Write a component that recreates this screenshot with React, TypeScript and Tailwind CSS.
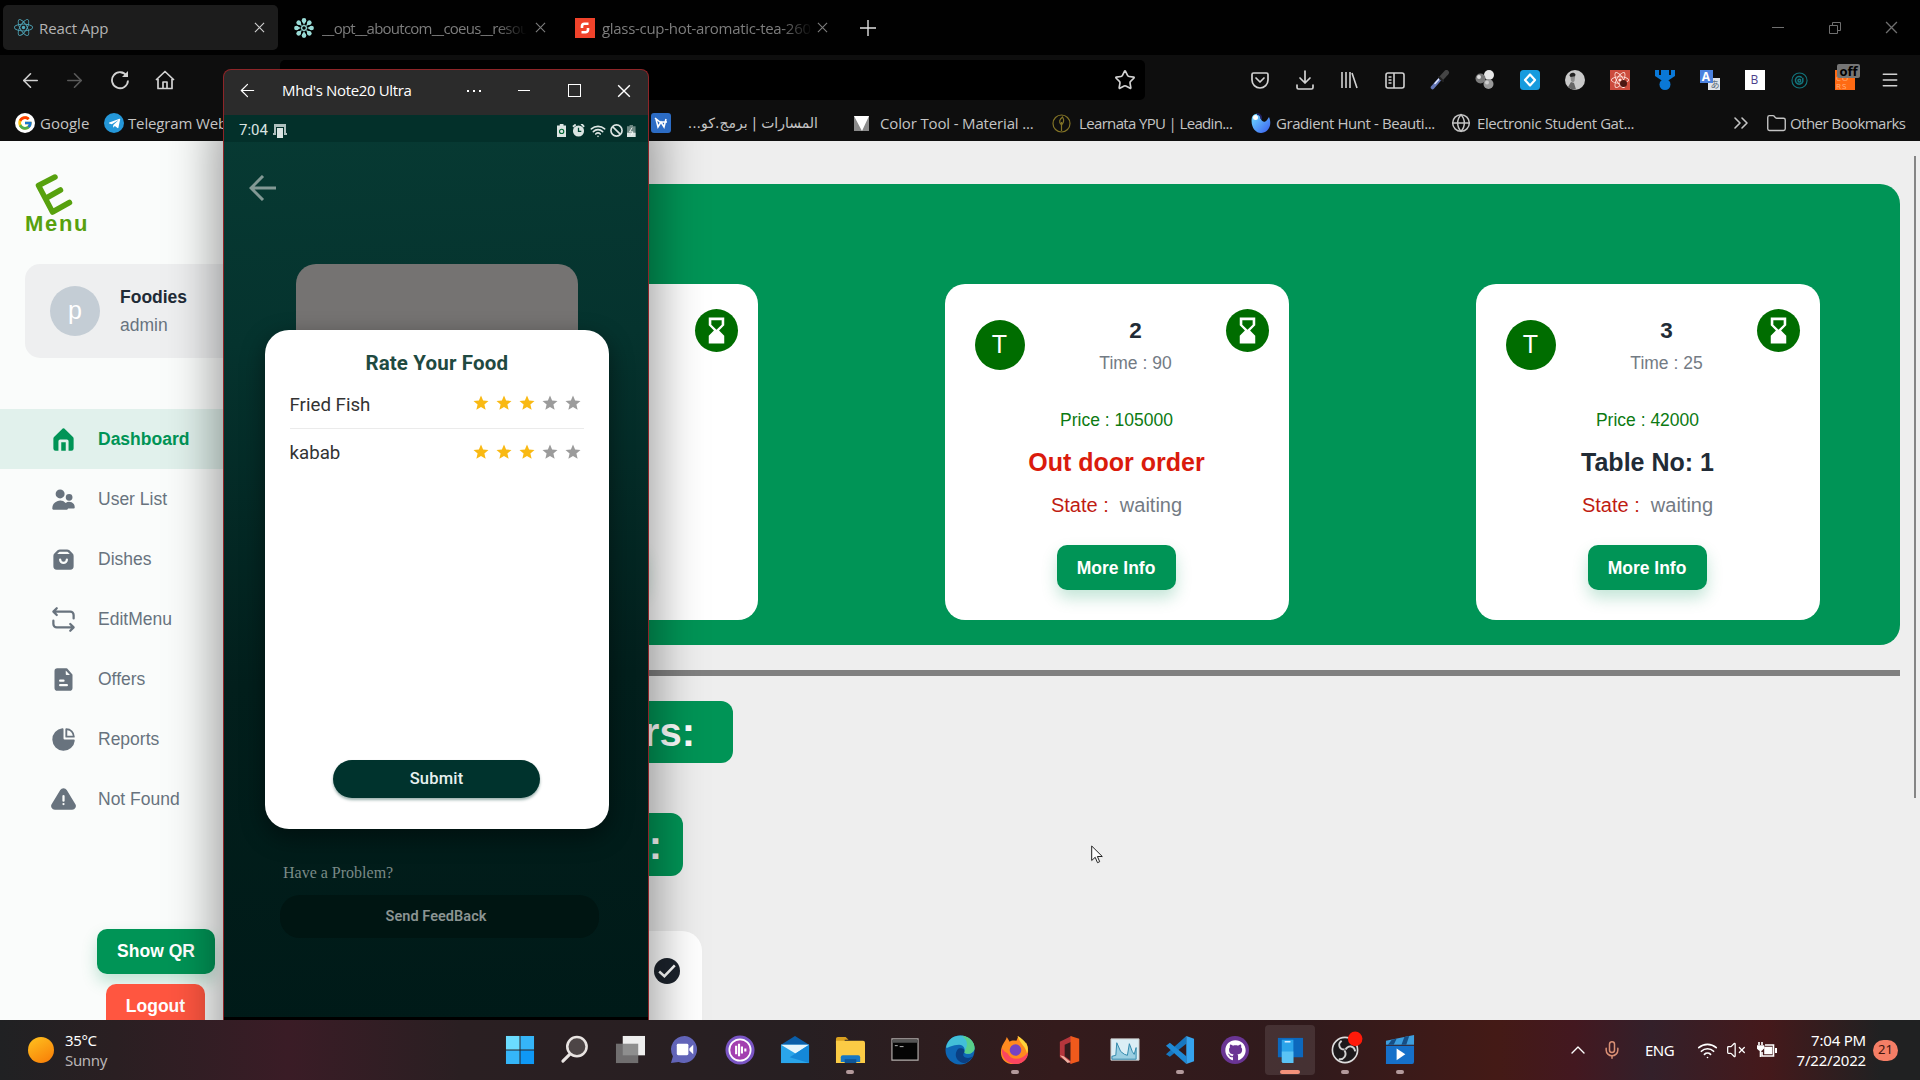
import React from "react";
import {
  ArrowLeft, ArrowRight, Star, Menu, Folder, Globe, ChevronsRight, Mic, ChevronUp, Wifi, VolumeX,
} from "lucide-react";
import { FaReact, FaGithub, FaTelegramPlane } from "react-icons/fa";
import { FcGoogle } from "react-icons/fc";

type P = { children?: React.ReactNode; className?: string };

/* A fixed-width cell that centres its icon. */
const Cell = ({ children, className = "" }: P) => (
  <div className={`flex shrink-0 items-center justify-center ${className}`}>{children}</div>
);

const Cross = ({ className = "" }: P) => (
  <svg viewBox="0 0 12 12" className={className} fill="none" stroke="currentColor" strokeWidth="1.2">
    <path d="M1 1l10 10M11 1L1 11" />
  </svg>
);

const Snow = () => (
  <svg viewBox="-10 -10 20 20" className="size-5" fill="#9adbd6">
    <circle r="2.4" fill="none" stroke="#9adbd6" strokeWidth="1.2" />
    {[0, 45, 90, 135, 180, 225, 270, 315].map((a) => (
      <g key={a} transform={`rotate(${a})`}>
        <circle cy="-7.6" r="2.3" />
        <path d="M-2 -7.2L0 -3L2 -7.2Z" />
      </g>
    ))}
  </svg>
);

function TabStrip() {
  return (
    <div className="flex h-[55px] bg-[#010101] pt-[5px] pl-[3px] text-[15px] text-[#7d7d7d]">
      <div className="flex h-[45px] w-[275px] items-center rounded-[5px] bg-[#1c1c1c] text-[#b4b4b4]">
        <Cell className="w-[40px]"><FaReact className="size-[19px] text-[#4fa9bd]" /></Cell>
        <span className="-ml-1 w-[205px] pt-[2px] tracking-[-0.1px] whitespace-nowrap">React App</span>
        <Cell className="w-[30px]"><Cross className="size-[11px] text-[#d0d0d0]" /></Cell>
      </div>
      <div className="ml-[16px] flex h-[45px] w-[265px] items-center">
        <Snow />
        <span className="ml-[8px] w-[205px] overflow-hidden pt-[2px] tracking-[-0.75px] whitespace-nowrap [mask-image:linear-gradient(90deg,#000_85%,transparent_100%)]">__opt__aboutcom__coeus__resou</span>
        <Cell className="w-[26px]"><Cross className="size-[11px]" /></Cell>
      </div>
      <div className="ml-[16px] flex h-[45px] w-[262px] items-center">
        <svg viewBox="0 0 20 20" className="size-5">
          <rect width="20" height="20" fill="#f0432b" />
          <path d="M13.500 5.800H9.500a2.500 2.500 0 0 0-2.500 2.500V10M6.500 14.200h4a2.500 2.500 0 0 0 2.500-2.500V10" fill="none" stroke="#fff" strokeWidth="2.6" />
        </svg>
        <span className="ml-[7px] w-[211px] overflow-hidden pt-[2px] tracking-[-0.3px] whitespace-nowrap [mask-image:linear-gradient(90deg,#000_85%,transparent_100%)]">glass-cup-hot-aromatic-tea-260</span>
        <Cell className="w-[18px]"><Cross className="size-[11px]" /></Cell>
      </div>
      <Cell className="ml-[19px] h-[45px] w-[24px]">
        <svg viewBox="0 0 16 16" className="size-4" stroke="#e0e0e0" strokeWidth="1.4"><path d="M8 0v16M0 8h16" /></svg>
      </Cell>
      <div className="ml-auto flex h-[45px] text-[#6f6f6f]">
        <Cell className="w-[57px]"><div className="h-px w-3 bg-[#6f6f6f]" /></Cell>
        <Cell className="w-[57px]">
          <svg viewBox="0 0 12 12" className="size-3" fill="none" stroke="currentColor"><path d="M.5 3.5h8v8h-8zM3.5 3.5v-3h8v8h-3" /></svg>
        </Cell>
        <Cell className="w-[57px]"><Cross className="size-[13px]" /></Cell>
      </div>
    </div>
  );
}

function NavBar() {
  const c = "w-[45px]";
  return (
    <div className="flex h-[50px] items-center bg-[#0e0e0e] pl-[8px] text-[#d2d2d2]">
      <Cell className="w-[44px]"><ArrowLeft className="size-[23px]" strokeWidth={1.7} /></Cell>
      <Cell className={c}><ArrowRight className="size-[23px] text-[#5a5a5a]" strokeWidth={1.7} /></Cell>
      <Cell className={c}>
        <svg viewBox="0 0 20 20" className="size-5" fill="none" stroke="currentColor" strokeWidth="1.8">
          <path d="M16.8 6A8 8 0 1 0 18 10.5" /><path d="M18 1v6h-6z" fill="currentColor" stroke="none" />
        </svg>
      </Cell>
      <Cell className={c}>
        <svg viewBox="0 0 20 20" className="size-5" fill="none" stroke="currentColor" strokeWidth="1.7" strokeLinejoin="round">
          <path d="M1 10L10 1.5 19 10M3 9v9.5h14V9M8 18v-6h4v6" />
        </svg>
      </Cell>
      <div className="ml-[93px] flex h-10 w-[865px] items-center justify-end rounded-[5px] bg-black pr-[9px]">
        <Star className="size-[22px]" strokeWidth={1.8} />
      </div>
      <div className="ml-[92px] flex h-full items-center">
        <Cell className={c}>
          <svg viewBox="0 0 18 17" className="w-[18px]" fill="none" stroke="currentColor" strokeWidth="1.7" strokeLinecap="round" strokeLinejoin="round">
            <path d="M2.5 1h13A1.5 1.5 0 0 1 17 2.5V8A8 8 0 0 1 1 8V2.5A1.500 1.500 0 0 1 2.500 1zM5 6l4 4 4-4" />
          </svg>
        </Cell>
        <Cell className={c}>
          <svg viewBox="0 0 18 20" className="w-[18px]" fill="none" stroke="currentColor" strokeWidth="1.7" strokeLinecap="round" strokeLinejoin="round">
            <path d="M9 1v12M4 8l5 5 5-5M1 15v2.500A1.500 1.500 0 0 0 2.500 19h13a1.500 1.500 0 0 0 1.500-1.500V15" />
          </svg>
        </Cell>
        <Cell className={c}>
          <svg viewBox="0 0 17 18" className="w-[17px]" stroke="currentColor" strokeWidth="1.6"><path d="M1 1v16M5 1v16M9 1v16M11 2l5 15" /></svg>
        </Cell>
        <Cell className={c}>
          <svg viewBox="0 0 20 17" className="w-[20px]" fill="none" stroke="currentColor" strokeWidth="1.6"><rect x="1" y="1" width="18" height="15" rx="2" /><path d="M9 1v15M3.500 5h3M3.500 8h3M3.500 11h3" /></svg>
        </Cell>
        <Cell className={c}>
          <svg viewBox="0 0 20 20" className="size-5" strokeLinecap="round"><path d="M2.500 17.500L10 9" stroke="#6578b8" strokeWidth="3.600" /><path d="M5 13.500l4-4.500" stroke="#dfe6ff" strokeWidth="1.500" /><path d="M11.500 8l5-5.500" stroke="#454545" strokeWidth="5" /><path d="M9 7l4 4" stroke="#222" strokeWidth="2" /></svg>
        </Cell>
        <Cell className={c}>
          <svg viewBox="0 0 20 20" className="size-5"><circle cx="14" cy="5" r="5" fill="#e8e8e8" /><circle cx="5.500" cy="8.500" r="5" fill="#7b7b7b" /><circle cx="4" cy="7" r="2" fill="#ddd" /><circle cx="13.500" cy="14" r="5" fill="#999" /><circle cx="12" cy="12.500" r="2" fill="#ccc" /></svg>
        </Cell>
        <Cell className={c}>
          <svg viewBox="0 0 20 20" className="size-5"><rect width="20" height="20" rx="3.500" fill="#169bde" /><path d="M10 4.500l5 5.500-5 5.500-5-5.500z" fill="none" stroke="#fff" strokeWidth="2.200" strokeLinejoin="round" /></svg>
        </Cell>
        <Cell className={c}>
          <svg viewBox="0 0 20 20" className="size-5"><circle cx="10" cy="10" r="10" fill="#c9c9c9" /><path d="M4.500 5.500c0-3 5-4 6-1l-.5 2-4.500.5z" fill="#222" /><path d="M5.500 7H10l-.5 4L8 12.500 6 11z" fill="#8d8d8d" /><path d="M3 17l3-5 3 1 2 6.500a10 10 0 0 1-8-2.500z" fill="#666" /></svg>
        </Cell>
        <Cell className={c}>
          <div className="relative flex size-5 items-center justify-center bg-[#cc4b3c]"><FaReact className="size-[18px] text-[#ffe9e3]" /><div className="absolute right-[3px] bottom-[3px] size-[7px] rounded-full bg-[#4a1712]" /></div>
        </Cell>
        <Cell className={c}>
          <svg viewBox="0 0 20 20" className="size-5" fill="#0a78d6"><path d="M0 0h4v5h2V0h8v5h2V0h4v6l-6 4H6L0 6z" /><circle cx="10" cy="14.500" r="5.500" /></svg>
        </Cell>
        <Cell className={c}>
          <div className="relative size-5">
            <div className="absolute right-0 bottom-0 flex size-[12px] items-end justify-end bg-[#dfe3e8] font-['Noto_Sans_CJK_JP',sans-serif] text-[9px] leading-[10px] text-[#567]">あ</div>
            <div className="absolute top-0 left-0 flex size-[13px] items-center justify-center bg-[#4b82e0] text-[12px] leading-none font-bold text-white">A</div>
          </div>
        </Cell>
        <Cell className={c}><div className="flex size-5 items-center justify-center bg-white text-[12px] text-[#4b3f8a]">B</div></Cell>
        <Cell className={c}>
          <svg viewBox="0 0 18 18" className="size-[17px]" fill="none" stroke="#12757d" strokeWidth="1.200"><circle cx="9" cy="9" r="8" /><path d="M11.500 6a4 4 0 1 0 1 4V6M10 8a1.500 1.500 0 1 0 .1 2z" strokeWidth="1.600" /></svg>
        </Cell>
        <Cell className="w-[46px]">
          <div className="relative size-5 bg-[#ff6a13] text-[8px] leading-[8px] text-[#ffb27f]">
            <div className="pt-[4px] pl-px tracking-[1px]">CO<br />RS</div>
            <div className="absolute -top-[6px] left-[2px] flex h-[14px] w-[23px] items-center justify-center rounded-[2px] bg-[#757575] text-[13px] leading-none font-bold text-black">off</div>
          </div>
        </Cell>
        <Cell className="w-[44px]"><Menu className="size-[20px]" strokeWidth={1.8} /></Cell>
      </div>
    </div>
  );
}

function Bookmarks() {
  const t = "whitespace-nowrap";
  return (
    <div className="flex h-[36px] items-center bg-[#0e0e0e] pl-[15px] text-[15px] text-[#c4c4c4]">
      <div className="flex size-5 items-center justify-center rounded-full bg-white"><FcGoogle className="size-4" /></div>
      <span className={`${t} ml-[5px] w-[64px]`}>Google</span>
      <div className="flex size-5 items-center justify-center rounded-full bg-[#2497d8]"><FaTelegramPlane className="size-[13px] text-white" /></div>
      <span className={`${t} ml-[4px] w-[523px] tracking-[-0.15px]`}>Telegram Web</span>
      <svg viewBox="0 0 20 20" className="size-5"><rect width="20" height="20" rx="3" fill="#2c6cc4" /><path d="M5 6l2 8 3-5 3 5 2-8M4 5l5 4h7" fill="none" stroke="#fff" strokeWidth="1.600" /></svg>
      <span dir="rtl" className={`${t} ml-[17px] w-[130px] text-right font-['DejaVu_Sans',sans-serif] text-[14px]`}>المسارات | برمج.كو...</span>
      <svg viewBox="0 0 15 15" className="ml-[36px] size-[15px]"><rect width="15" height="15" fill="#8a8a8a" /><path d="M0 0h15L8 15z" fill="#fff" /></svg>
      <span className={`${t} ml-[11px] w-[172px] tracking-[-0.15px]`}>Color Tool - Material ...</span>
      <svg viewBox="0 0 19 19" className="size-[19px]" fill="none" stroke="#827326" strokeWidth="1.200"><circle cx="9.500" cy="9.500" r="8.500" /><path d="M9.500 17V8M9.500 11C6 8 8 5 10.500 3c2 3 1 6-1 8z" /></svg>
      <span className={`${t} ml-[8px] w-[172px] tracking-[-0.65px]`}>Learnata YPU | Leadin...</span>
      <svg viewBox="0 0 20 20" className="size-5"><defs><linearGradient id="gh" x1="0" y1="0" x2="1" y2="1"><stop stopColor="#6fe0ff" /><stop offset="1" stopColor="#3a5cf0" /></linearGradient></defs><path d="M1 4C4-1 10 0 10 6c1 3 4 4 6 1l2-3c4 9-2 16-8 16S-1 13 1 4z" fill="url(#gh)" /><circle cx="4.500" cy="4.500" r="2.500" fill="#fff" /><path d="M6 1c3 0 5 3 4 5" stroke="#202060" strokeWidth="2" fill="none" /></svg>
      <span className={`${t} ml-[5px] w-[175px] tracking-[-0.42px]`}>Gradient Hunt - Beauti...</span>
      <Globe className="size-[20px]" strokeWidth={1.8} />
      <span className={`${t} ml-[6px] w-[252px] tracking-[-0.42px]`}>Electronic Student Gat...</span>
      <ChevronsRight className="size-[24px]" strokeWidth={1.6} />
      <Folder className="ml-[13px] size-[21px]" strokeWidth={1.6} />
      <span className={`${t} ml-[3px] tracking-[-0.55px]`}>Other Bookmarks</span>
    </div>
  );
}

const navIcons: Record<string, React.ReactNode> = {
  Dashboard: <path d="M20.420 9.800L12.710 2.300a1 1 0 0 0-1.420 0L3.580 9.800A2 2 0 0 0 3 11.300V20a2 2 0 0 0 2 2h2.500v-8.500A1.500 1.500 0 0 1 9 12h6a1.500 1.500 0 0 1 1.500 1.500V22H19a2 2 0 0 0 2-2v-8.700a2 2 0 0 0-.58-1.500zM10 22h4v-7.500h-4z" />,
  "User List": <path d="M9 11a4 4 0 1 0-4-4 4 4 0 0 0 4 4zm8 2a3 3 0 1 0-3-3 3 3 0 0 0 3 3zm4 7a1 1 0 0 0 1-1 5 5 0 0 0-8.060-3.950A7 7 0 0 0 2 20a1 1 0 0 0 1 1h12a1 1 0 0 0 1-1" />,
  Dishes: <path d="M20.120 6.710l-2.830-2.830A3 3 0 0 0 15.170 3H8.830a3 3 0 0 0-2.120.88L3.880 6.710A3 3 0 0 0 3 8.830V18a3 3 0 0 0 3 3h12a3 3 0 0 0 3-3V8.830a3 3 0 0 0-.88-2.120zM12 16a4 4 0 0 1-4-4 1 1 0 0 1 2 0 2 2 0 0 0 4 0 1 1 0 0 1 2 0 4 4 0 0 1-4 4zM6.410 7l1.710-1.710A1.050 1.050 0 0 1 8.830 5h6.340a1.050 1.050 0 0 1 .71.29L17.590 7z" />,
  EditMenu: <path d="M6 2L3 5l3 3M3.500 5H18a3 3 0 0 1 3 3v3M18 16l3 3-3 3M20.500 19H6a3 3 0 0 1-3-3v-3" fill="none" stroke="currentColor" strokeWidth="2" strokeLinecap="round" strokeLinejoin="round" />,
  Offers: <path d="M19.740 7.330l-4.440-5a1 1 0 0 0-.74-.33h-8A2.530 2.530 0 0 0 4 4.500v15A2.530 2.530 0 0 0 6.560 22h10.880A2.530 2.530 0 0 0 20 19.500V8a1 1 0 0 0-.26-.67zM9 12h3a1 1 0 0 1 0 2H9a1 1 0 0 1 0-2zm6 6H9a1 1 0 0 1 0-2h6a1 1 0 0 1 0 2zm-.29-10a.79.79 0 0 1-.71-.85V4l3.740 4z" />,
  Reports: <path d="M14.500 10.330h6.670A.83.83 0 0 0 22 9.500 7.500 7.500 0 0 0 14.500 2a.83.83 0 0 0-.83.83V9.500a.83.83 0 0 0 .83.83zm.83-6.600a5.830 5.830 0 0 1 4.940 4.940h-4.940zM21.080 12h-8.150a.91.91 0 0 1-.91-.91V2.920A.92.92 0 0 0 11 2a10 10 0 1 0 11 11 .92.92 0 0 0-.92-1z" />,
  "Not Found": <path d="M22.560 16.300L14.890 3.580a3.430 3.430 0 0 0-5.780 0L1.440 16.300a3 3 0 0 0-.05 3A3.370 3.370 0 0 0 4.330 21h15.340a3.370 3.370 0 0 0 2.940-1.660 3 3 0 0 0-.05-3.040zM12 17a1 1 0 1 1 1-1 1 1 0 0 1-1 1zm1-4a1 1 0 0 1-2 0V9a1 1 0 0 1 2 0z" />,
};

function Sidebar() {
  return (
    <aside className="flex w-[343px] shrink-0 flex-col overflow-hidden bg-[#fafcfb] text-[17.5px]">
      <div className="flex h-[123px] shrink-0 flex-col pt-[28px] pl-[25px] text-[#57a10e]">
        <svg viewBox="0 0 42 48" className="ml-[8px] h-[48px] w-[42px] shrink-0" fill="none" stroke="#57a10e" strokeWidth="5.500" strokeLinecap="round" strokeLinejoin="round">
          <path d="M22 8L5.500 16.500L19.500 43L36.500 33.500M12.500 29.500L27.500 21" />
        </svg>
        <span className="-mt-[6px] text-[22px] leading-[26px] font-bold tracking-[1.700px]">Menu</span>
      </div>
      <div className="ml-[25px] flex h-[94px] shrink-0 items-center rounded-[15px] bg-[#eeeff0]">
        <div className="ml-[25px] flex size-[50px] items-center justify-center rounded-full bg-[#c4cdd5] text-[25px] text-white">p</div>
        <div className="ml-5">
          <div className="leading-[28px] font-bold text-[#212b36]">Foodies</div>
          <div className="leading-[28px] text-[#68737e]">admin</div>
        </div>
      </div>
      <nav className="mt-[51px] flex shrink-0 flex-col">
        {Object.keys(navIcons).map((n) => (
          <div key={n} className={n === "Dashboard" ? "flex h-[60px] items-center bg-[#e1f1ec] font-bold text-[#009456]" : "flex h-[60px] items-center text-[#68737e]"}>
            <svg viewBox="0 0 24 24" className="ml-[50px] size-[27px]" fill="currentColor" fillRule="evenodd">{navIcons[n]}</svg>
            <span className="ml-[21px]">{n}</span>
          </div>
        ))}
      </nav>
      <div className="mt-[100px] ml-[97px] flex w-[118px] shrink-0 flex-col items-center gap-[10px] font-bold text-white">
        <div className="flex h-[45px] w-[118px] shrink-0 items-center justify-center rounded-[10px] bg-[#009456] shadow-[0_8px_16px_rgba(0,148,86,0.24)]">Show QR</div>
        <div className="mr-px flex h-[45px] w-[99px] shrink-0 items-center justify-center rounded-[10px] bg-[#ff5640]">Logout</div>
      </div>
    </aside>
  );
}

function OrderCard({ n, time, price, title, state, red }: { n: string; time: string; price: string; title: string; state: string; red?: boolean }) {
  return (
    <div className="flex h-[336px] w-[344px] shrink-0 flex-col items-center rounded-[20px] bg-white text-[17.5px]">
      <div className="flex h-[120px] w-full pl-[30px]">
        <div className="mt-[36px] flex size-[50px] items-center justify-center rounded-full bg-[#006d00] text-[25px] text-white">T</div>
        <div className="ml-[51px] flex w-[120px] flex-col items-center pt-[32px]">
          <div className="text-[22.5px] leading-[30px] font-bold text-[#212b36]">{n}</div>
          <div className="mt-[3px] leading-[28px] text-[#737b84]">Time : {time}</div>
        </div>
        <div className="mt-[25px] ml-[30px] flex size-[43px] items-center justify-center rounded-full bg-[#006d00]">
          <svg viewBox="0 0 24 24" className="size-[31px]" fill="#fff"><path d="m18 22-.01-6L14 12l3.990-4.010L18 2H6v6l4 4-4 3.990V22h12zM8 7.500V4h8v3.500l-4 4-4-4z" /></svg>
        </div>
      </div>
      <div className="leading-[32px] text-[#0c7a12]">Price : {price}</div>
      <div className={red ? "mt-[9px] text-[25px] leading-[34px] font-bold text-[#da1b0c]" : "mt-[9px] text-[25px] leading-[34px] font-bold text-[#212b36]"}>{title}</div>
      <div className="mt-[11px] text-[20px] leading-[30px] whitespace-pre text-[#737b84]"><span className="text-[#bf1c12]">State :</span>{"  "}{state}</div>
      <div className="mt-[25px] mr-px flex h-[45px] w-[119px] items-center justify-center rounded-[10px] bg-[#009456] pt-px font-bold text-white shadow-[0_8px_16px_rgba(0,148,86,0.24)]">More Info</div>
    </div>
  );
}

function Dashboard() {
  return (
    <main className="flex flex-1 flex-col overflow-hidden bg-[#eee] pt-[43px] pl-[20px]">
      <section className="mr-[20px] flex h-[461px] shrink-0 justify-end gap-[187px] rounded-[20px] bg-[#009456] pt-[100px] pr-[80.500px]">
        <OrderCard n="1" time="45" price="63000" title="Table 1" state="ready" />
        <OrderCard n="2" time="90" price="105000" title="Out door order" state="waiting" red />
        <OrderCard n="3" time="25" price="42000" title="Table No: 1" state="waiting" />
      </section>
      <div className="mt-[25px] mr-[20px] h-[6px] shrink-0 bg-[#808080]" />
      <h2 className="mt-[25px] flex h-[62px] w-[370px] shrink-0 items-center justify-end rounded-[12px] bg-[#009456] pr-[38px] text-[40px] font-bold text-white">Current Orders:</h2>
      <h2 className="mt-[50px] flex h-[63px] w-[320px] shrink-0 items-center justify-end rounded-[12px] bg-[#009456] pr-[21px] text-[40px] font-bold text-white">Orders:</h2>
      <div className="mt-[55px] flex h-[110px] w-[339px] shrink-0 justify-end rounded-[20px] bg-white pt-[27px] pr-[22px]">
        <svg viewBox="0 0 25 25" className="size-[26px]"><circle cx="12.500" cy="12.500" r="12.500" fill="#1c232c" /><path d="M5 13l5 4.500 10-10.500" fill="none" stroke="#fff" strokeWidth="2.400" /></svg>
      </div>
    </main>
  );
}

const StarShape = ({ on }: { on: boolean }) => (
  <svg viewBox="0 0 24 24" className="size-[18px]" fill={on ? "#f9b913" : "#9b9b9b"}><path d="M12 17.270L18.180 21l-1.640-7.030L22 9.240l-7.190-.61L12 2 9.190 8.630 2 9.240l5.460 4.730L5.820 21z" /></svg>
);

function RateRow({ name }: { name: string }) {
  return (
    <div className="flex h-[47.500px] items-center justify-between pr-[2px] pb-px">
      <span className="pt-[3px] text-[18.700px] text-[#333]">{name}</span>
      <div className="flex gap-[5px]">{[1, 2, 3, 4, 5].map((i) => <StarShape key={i} on={i < 4} />)}</div>
    </div>
  );
}

function PhoneWindow() {
  return (
    <div className="absolute top-[69px] left-[223px] flex h-[951px] w-[426px] flex-col overflow-hidden rounded-t-[8px] border border-b-0 border-[#8d2528] bg-[#2b2b2b] font-['Roboto',sans-serif]">
      <div className="flex h-[45px] shrink-0 items-center pb-1 font-['Open_Sans',sans-serif] text-[15px] text-white">
        <Cell className="w-[46px]"><ArrowLeft className="size-[21px]" strokeWidth={1.4} /></Cell>
        <span className="ml-[12px] w-[169px] tracking-[-0.35px] whitespace-nowrap">Mhd's Note20 Ultra</span>
        <Cell className="w-[50px] gap-[4px]"><i className="size-[2px] bg-white" /><i className="size-[2px] bg-white" /><i className="size-[2px] bg-white" /></Cell>
        <Cell className="w-[50px]"><div className="h-px w-3 bg-white" /></Cell>
        <Cell className="w-[50px]"><div className="size-[13px] border border-white" /></Cell>
        <Cell className="w-[49px]"><Cross className="size-[14px]" /></Cell>
      </div>
      <div className="flex flex-1 flex-col bg-[linear-gradient(178deg,#073a33_0%,#05332e_25%,#021f1c_62%,#001a18_100%)]">
        <div className="flex h-[27px] shrink-0 items-center bg-[#03302a] pt-1 pr-[12px] pl-[15px] text-[#dbe4e2]">
          <span className="w-[34px] text-[15px]">7:04</span>
          <svg viewBox="0 0 14 14" className="size-[14px]" fill="#dbe4e2"><path d="M1 0h12v9h1v2h-3V3H3v8H0V9h1z" opacity=".8" /><rect x="4" y="4" width="6" height="10" /></svg>
          <div className="ml-auto flex items-center gap-[4px]">
            <svg viewBox="0 0 10 14" className="h-[13px]" fill="#dbe4e2"><path d="M3 0h4v1.500h3V14H0V1.500h3z" /><circle cx="5" cy="8" r="2.300" fill="none" stroke="#063" strokeWidth="1.200" /></svg>
            <svg viewBox="0 0 14 14" className="ml-[2px] h-[13px]"><circle cx="7" cy="7.500" r="6" fill="#dbe4e2" /><path d="M1 3l3-2.500M13 3L10-.5" stroke="#dbe4e2" strokeWidth="2" /><path d="M7 4v4h3" fill="none" stroke="#043" strokeWidth="1.400" /></svg>
            <Wifi className="ml-px size-[16px]" strokeWidth={2.4} />
            <svg viewBox="0 0 14 14" className="h-[13px]" fill="none" stroke="#dbe4e2" strokeWidth="1.800"><circle cx="7" cy="7" r="6" /><path d="M3 3l8 8" /></svg>
            <svg viewBox="0 0 10 14" className="h-[12px]"><path d="M3 0h4v1.500h3V14H0V1.500h3z" fill="#6d8782" /><path d="M0 9h10v5H0z" fill="#dbe4e2" /><path d="M6 3L3 8h4l-2 4" stroke="#fff" fill="none" /></svg>
          </div>
        </div>
        <svg viewBox="0 0 27 26" className="mt-[33px] ml-[25px] h-[26px] w-[27px] shrink-0" fill="none" stroke="#839995" strokeWidth="3"><path d="M14 1L2 13l12 12M2 13h25" /></svg>
        <div className="mt-[63px] ml-[72px] h-[66px] w-[282px] shrink-0 rounded-t-[20px] bg-[#757372]" />
        <div className="ml-[40.500px] flex h-[499px] w-[344.500px] shrink-0 flex-col rounded-[24px] bg-white px-[25px] pt-[16px] shadow-[0_8px_24px_rgba(0,0,0,0.45)]">
          <div className="text-center text-[20.500px] leading-[34px] font-bold tracking-[0.150px] text-[#1f4a41]">Rate Your Food</div>
          <RateRow name="Fried Fish" />
          <div className="h-px bg-[#ebebeb]" />
          <RateRow name="kabab" />
          <div className="mt-[284px] ml-[43.500px] flex h-[38px] w-[207px] items-center justify-center rounded-full bg-[#00332d] text-[16.500px] font-medium tracking-[0.200px] text-[#e6f1ef] shadow-[0_2px_3px_rgba(0,60,50,0.4)]">Submit</div>
        </div>
        <div className="mt-[34px] ml-[59px] font-['Liberation_Serif',serif] text-[16px] leading-[20px] text-[#7a8a87]">Have a Problem?</div>
        <div className="mt-[12px] ml-[56px] flex h-[43px] w-[319px] items-center justify-center rounded-[20px] bg-[#001512] pr-[7px] text-[14.500px] font-semibold tracking-[0.050px] text-[#8b9492]">Send FeedBack</div>
        <div className="mt-auto h-[3px] bg-black" />
      </div>
    </div>
  );
}

const apps: { k: string; u?: boolean; i: React.ReactNode }[] = [
  { k: "start", i: <g fill="#35b5f8"><path d="M1 1h14v14H1z" fill="#6bdcff" /><path d="M16 1h14v14H16zM1 16h14v14H1z" /><path d="M16 16h14v14H16z" fill="#0f98f5" /></g> },
  { k: "search", i: <g fill="#4d4546" stroke="#e9e4e2" strokeWidth="2.600" strokeLinecap="round"><circle cx="17.500" cy="12" r="10" /><path d="M10 20l-7 7" strokeWidth="3.200" /></g> },
  { k: "tasks", i: <g><path d="M8 1h23v20H8z" fill="#eee" /><path d="M1 9h23v20H1z" fill="#7d7d7d" opacity=".85" /></g> },
  { k: "chat", i: <g><path d="M15.500 1A14 14 0 1 1 9 28L1 29l2-7A14 14 0 0 1 15.500 1z" fill="#6264b8" /><rect x="7" y="9" width="12" height="12" rx="1.500" fill="#fff" /><path d="M20 14l4-4v10l-4-4z" fill="#fff" /></g> },
  { k: "voice", i: <g><circle cx="15.500" cy="15.500" r="15" fill="#7a55c4" /><circle cx="15.500" cy="15.500" r="11" fill="#a33fb0" stroke="#fff" strokeWidth="1.800" /><path d="M11.500 11v9M14.500 9v13M17.500 12v7M21 14v3" stroke="#fff" strokeWidth="2.200" /></g> },
  { k: "mail", i: <g><path d="M1 10L15.500 1 30 10v4H1z" fill="#0a5ea8" /><path d="M1 10h29v19H1z" fill="#2aa5ea" /><path d="M1 10h29L16 19z" fill="#e6f5fb" /><path d="M30 10L10 23l20 6z" fill="#1488d8" /></g> },
  { k: "files", u: true, i: <g><path d="M1 4q0-2 2-2h8l3 3h-4v5H1z" fill="#d9a01f" /><path d="M1 6h28q2 0 2 2v21H1z" fill="#fbcb45" /><path d="M6 28v-5q0-2 2-2h16q2 0 2 2v5z" fill="#1777c4" /><path d="M10 25h12v4H10z" fill="#0e5596" /></g> },
  { k: "terminal", i: <g><path d="M2 4h27v22H2z" fill="#050505" stroke="#b5b0ae" strokeWidth="1.200" /><path d="M2 5h27v3H2z" fill="#555" /><path d="M5 11h3M10 12h4" stroke="#bbb" /></g> },
  { k: "edge", i: <g><circle cx="15.500" cy="15.500" r="15" fill="#0e66b4" /><path d="M1 13C3 4 9 .5 16 .5c9 0 15 7 14.500 13.500-.5 5-7 7-11 4 2-3 0-8-5-8C7 10 3 14 1 13z" fill="#42bfd8" /><path d="M18 .8C27 2 31 9 30.500 14c-.5 5-7 7-11 4 3-5 6-11-1.500-17z" fill="#58cf8a" /><path d="M20 18c-4 4 3 8 9 4-2 3-5 6-8 7-9 0-13-9-7-15 3-1 7 0 6 4z" fill="#0a3f83" /></g> },
  { k: "firefox", u: true, i: <g><path d="M2 12C4 7 6 6 7 2l3 5c3-2 4-1 7-1l2-5 5 8 3-1c4 7 3 21-11 22C2 31-1 20 2 12z" fill="#ff8a1f" /><path d="M18 1c8 4 13 11 10 18-2-8-6-8-10-18z" fill="#ffd43b" /><path d="M2 14c-1 10 6 16 14 16s13-6 13-12c-7 9-18 8-21 1-2-1-4-2-6-5z" fill="#fb4560" /><circle cx="16" cy="15.500" r="6" fill="#7443c4" /></g> },
  { k: "office", i: <g transform="translate(-1 0)"><path d="M6 7L18 1v6l-7 3v12l7 5v3L6 23z" fill="#b5363c" /><path d="M17 1l9 3v23l-9 3z" fill="#f05a1c" /><path d="M6 21l4 1 7 6-3 1z" fill="#efb0a0" /></g> },
  { k: "chart", i: <g><path d="M1 4h29v22H1z" fill="#dbeef5" stroke="#c7c7c7" /><path d="M2 22l4-1 1-13 4 9 4 3 3 1 2-12 3 8 2 3 2-7v12H2z" fill="#9acfe2" stroke="#2f88ab" /></g> },
  { k: "code", u: true, i: <g><path d="M22 1v8L5 22.500 1 20z" fill="#1777c0" /><path d="M1 11l4-3 17 14v8z" fill="#1f8ad6" /><path d="M22 1l8 3v23l-8 3z" fill="#35a3ee" /></g> },
  { k: "github", i: <g><circle cx="15.500" cy="15.500" r="14.500" fill="#6a3594" /></g> },
  { k: "phone", u: true, i: <g><path d="M3 3h26v20H3z" fill="#0c68bd" /><path d="M7 5h12v24H9q-2 0-2-2z" fill="#2ba4ea" /><path d="M7 17h12v12H9q-2 0-2-2z" fill="#6fd0fa" opacity=".7" /><path d="M10 7h6" stroke="#def" strokeWidth="1.500" /></g> },
  { k: "record", u: true, i: <g><circle cx="15.500" cy="15.500" r="13" fill="#1c191b" stroke="#ddd" strokeWidth="1.700" /><path d="M15 15C9 15 8 9 12 6M16 15c3-5 9-4 10 2M15 16c3 5-1 10-6 9" fill="none" stroke="#d2d2d2" strokeWidth="2" /><circle cx="26" cy="4" r="7.500" fill="#ff1a0a" /></g> },
  { k: "movies", u: true, i: <g><path d="M1 6L30 0v10H1z" fill="#3d9ede" /><path d="M7 5l5-1-3 6H3zM20 2l5-1-3 9h-5z" fill="#154e86" /><path d="M1 11h29v17q0 2-2 2H1z" fill="#1670c9" /><path d="M12 14l9 6-9 6z" fill="#fff" /></g> },
];

function Taskbar() {
  return (
    <footer className="relative flex h-[60px] shrink-0 items-center bg-[linear-gradient(90deg,#202123_0%,#2a1f22_6%,#3a1c26_15%,#2a1f22_24%,#271f22_42%,#341b1c_55%,#301a1c_68%,#441a16_78%,#431820_82%,#33202a_86%,#45191b_92%,#202122_98%)] font-['Noto_Sans',sans-serif] text-[15px] text-white">
      <div className="ml-[28px] size-[26px] rounded-full bg-[linear-gradient(150deg,#ffc31f,#f87a06)]" />
      <div className="ml-[11px] w-[427px] text-[15px] leading-[20px] tracking-[-0.350px]">35°C<br /><span className="text-[#b9b5b6]">Sunny</span></div>
      <div className="flex h-full items-center">
        {apps.map((a) => (
          <Cell key={a.k} className="h-full w-[55.060px]">
            <div className={a.k === "phone" ? "relative flex size-[50px] items-center justify-center rounded-[4px] bg-white/10" : "relative flex size-[50px] items-center justify-center"}>
              <svg viewBox="0 0 31 31" className="size-[30px] overflow-visible">{a.i}</svg>
              {a.k === "github" && <FaGithub className="absolute size-[21px] text-white" />}
              {a.u && <div className={a.k === "phone" ? "absolute bottom-px h-[4px] w-5 rounded-full bg-[#f3917a]" : "absolute bottom-px h-[4px] w-2 rounded-full bg-[#b39a9c]"} />}
            </div>
          </Cell>
        ))}
      </div>
      <div className="ml-auto flex items-center">
        <Cell className="w-[30px]"><ChevronUp className="size-[24px]" strokeWidth={1.4} /></Cell>
        <Cell className="ml-[4px] w-[30px]"><Mic className="size-[20px] text-[#d98f74]" strokeWidth={1.8} /></Cell>
        <span className="ml-[18px] w-[29px] tracking-[-0.500px]">ENG</span>
        <Cell className="ml-[20px] w-[26px]"><Wifi className="size-[21px]" strokeWidth={1.900} /></Cell>
        <Cell className="ml-[3px] w-[26px]"><VolumeX className="size-[20px]" strokeWidth={1.500} /></Cell>
        <Cell className="ml-[5px] w-[26px]">
          <svg viewBox="0 0 20 16" className="w-[20px]" fill="none" stroke="#fff" strokeWidth="1.600"><path d="M8 3h8.500v11H5V10" /><path d="M8 5.500h6.500v6H8z" fill="#fff" /><path d="M19 6v5" strokeWidth="2" /><path d="M2 0v3M5 0v3M.5 4h6v2l-2 2h-2l-2-2zM3.500 8v7" fill="#fff" /></svg>
        </Cell>
        <div className="w-[86px] text-right leading-[20px] tracking-[-0.200px] whitespace-nowrap">7:04 PM<br />7/22/2022</div>
        <div className="mr-[22px] ml-[7px] flex h-[21px] w-[25px] items-center justify-center rounded-full bg-[#f57e66] text-[13px] text-[#40140c]">21</div>
      </div>
    </footer>
  );
}

export default function App() {
  return (
    <div className="relative flex h-[1080px] w-[1920px] flex-col overflow-hidden bg-black font-['Open_Sans',sans-serif]">
      <TabStrip />
      <NavBar />
      <Bookmarks />
      <div className="relative flex h-[879px] shrink-0 overflow-hidden font-['Liberation_Sans',Arial,sans-serif]">
        <Sidebar />
        <Dashboard />
        <div className="absolute top-[15px] right-[4px] h-[642px] w-[2px] bg-[#858585]" />
        <div className="absolute -top-[30px] left-[223px] h-[950px] w-[426px] shadow-[0_10px_45px_8px_rgba(0,0,0,0.38)]" />
        <svg viewBox="0 0 12 19" className="absolute top-[704px] left-[1091px] h-[19px] w-[12px]" fill="#fff" stroke="#222"><path d="M.7 1v14.500l3.500-3.200 2.300 5.400 2.200-1-2.300-5.200h4.900z" /></svg>
      </div>
      <Taskbar />
      <PhoneWindow />
    </div>
  );
}
